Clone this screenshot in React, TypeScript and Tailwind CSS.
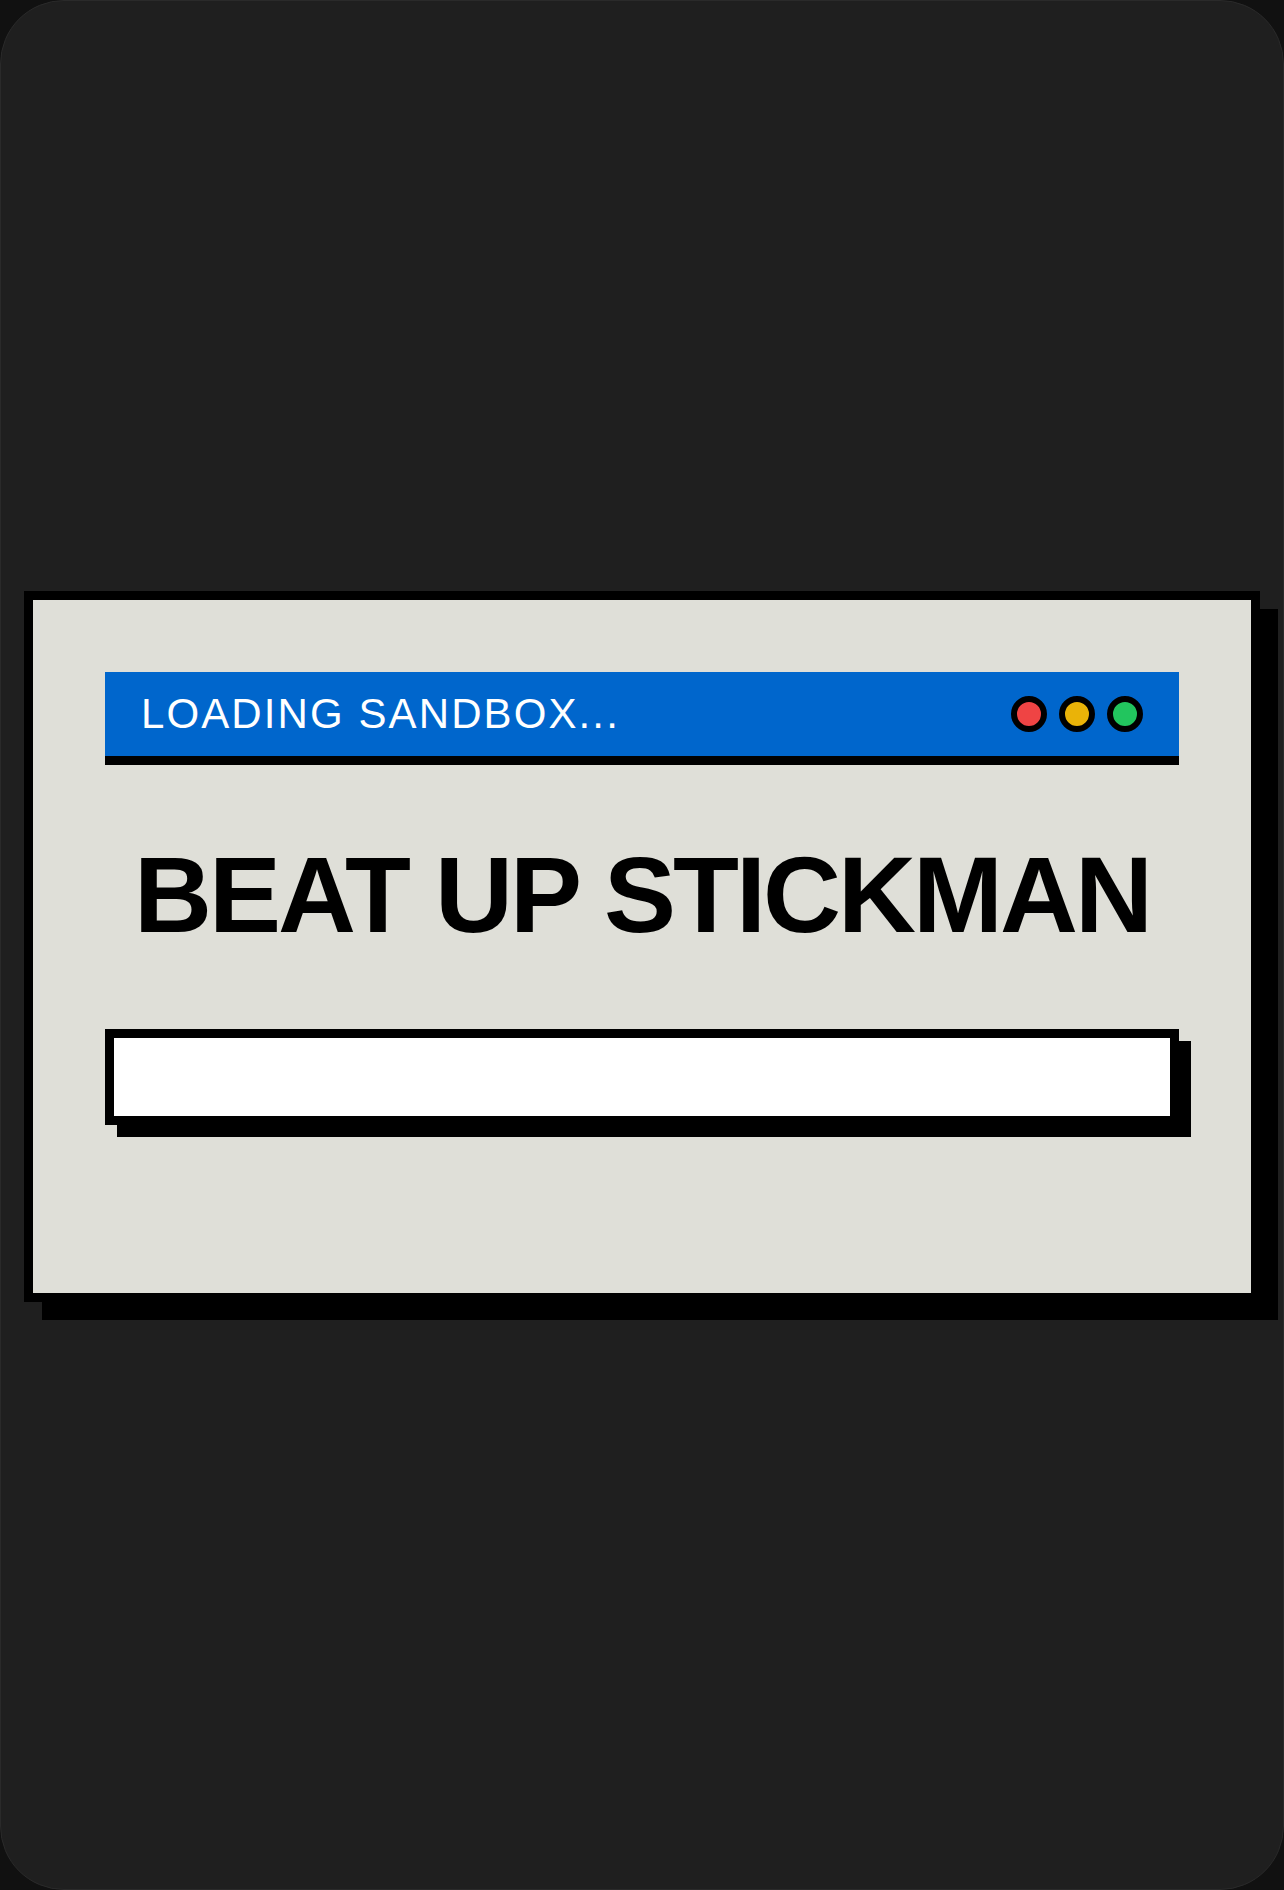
export default function App() {
  return (
    <div className="min-h-[1890px] w-full bg-[#111111]">
      <div className="flex h-[1890px] w-full items-center justify-center rounded-[64px] border border-[#2a2a2a] bg-[#1f1f1f] px-[23px] pt-[3px]">
        {/* Loading card */}
        <div className="w-full border-[9px] border-black bg-[#dfdfd8] px-[72px] pt-[72px] pb-[168px] shadow-[18px_18px_0_0_#000]">
          <div className="flex h-[93px] items-center justify-between border-b-[9px] border-black bg-[#0066cc] px-[36px]">
            <span className="font-['Liberation_Sans',Arial,sans-serif] text-[42px] leading-none tracking-wider text-white">
              LOADING SANDBOX...
            </span>
            <div className="flex items-center gap-[12px]">
              <span className="h-[36px] w-[36px] rounded-full border-[6px] border-black bg-[#ef4444]" />
              <span className="h-[36px] w-[36px] rounded-full border-[6px] border-black bg-[#eab308]" />
              <span className="h-[36px] w-[36px] rounded-full border-[6px] border-black bg-[#22c55e]" />
            </div>
          </div>

          <h1 className="mt-[70px] mb-[74px] text-center font-['Liberation_Sans',Arial,sans-serif] text-[108px] font-bold leading-[120px] tracking-[-3px] text-black">
            BEAT UP STICKMAN
          </h1>

          {/* Progress track, empty */}
          <div className="h-[96px] w-full border-[9px] border-black bg-white shadow-[12px_12px_0_0_#000]" />
        </div>
      </div>
    </div>
  );
}
